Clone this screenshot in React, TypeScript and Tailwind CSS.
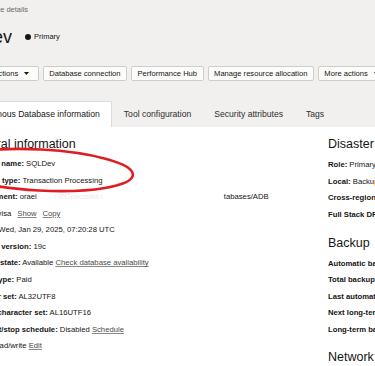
import React from 'react';

const Caret = () => (
  <svg width="5" height="3" viewBox="0 0 5 3" className="ml-[6px] mr-[3px] shrink-0">
    <path d="M0 0 L5 0 L2.5 3 Z" fill="#161513" />
  </svg>
);

function Btn({ label, caret }: { label: string; caret?: boolean }) {
  return (
    <div className="flex items-center h-[15px] px-[5.5px] border border-[#cfcdca] bg-[#fcfcfb] rounded-[2px] text-[7.6px] text-[#161513] whitespace-nowrap shrink-0">
      {label}
      {caret && <Caret />}
    </div>
  );
}

function Row({ label, children }: { label: string; children?: React.ReactNode }) {
  return (
    <div className="whitespace-nowrap leading-[16.55px]">
      <span className="font-bold">{label}</span> {children}
    </div>
  );
}

function Link({ children }: { children: React.ReactNode }) {
  return <span className="text-[#4a4a48] underline underline-offset-[1px] decoration-[#8a8a88]">{children}</span>;
}

export default function App() {
  const tabs = ['Autonomous Database information', 'Tool configuration', 'Security attributes', 'Tags'];

  return (
    <div className="relative w-[375px] h-[366px] overflow-hidden bg-white text-[#161513]" style={{ fontFamily: '"Liberation Sans", Arial, sans-serif' }}>
      <div className="-ml-[45px] w-[760px]">
        {/* header */}
        <div className="bg-[#f1f0ee]">
          <div className="pt-[5px] -ml-[27px] text-[7.5px] leading-[10px] text-[#6b6a68] whitespace-nowrap">
            Autonomous Database details
          </div>
          <div className="mt-[11px] -ml-[11px] flex items-center h-[22px]">
            <span className="text-[18px] leading-[22px]">SQLDev</span>
            <span className="ml-[13px] w-[6px] h-[6px] rounded-full bg-[#161513]" />
            <span className="ml-[3px] text-[7.5px]">Primary</span>
          </div>
          <div className="mt-[18px] -ml-[2px] flex gap-[4px]">
            <Btn label="Database actions" caret />
            <Btn label="Database connection" />
            <Btn label="Performance Hub" />
            <Btn label="Manage resource allocation" />
            <Btn label="More actions" caret />
          </div>
          <div className="mt-[20px] flex h-[26px]">
            {tabs.map((t, i) => (
              <div
                key={t}
                className={
                  i === 0
                    ? 'flex items-center px-[11.5px] bg-white border-t border-l border-r border-[#dcdbd9] rounded-t-[2px] text-[8.6px] whitespace-nowrap'
                    : 'flex items-center px-[11.5px] text-[8.6px] text-[#2f2e2c] whitespace-nowrap'
                }
              >
                {t}
              </div>
            ))}
          </div>
        </div>

        {/* content */}
        <div className="ml-[10px] flex text-[7.7px]">
          <div className="w-[363px] shrink-0 pt-[9px]">
            <h2 className="text-[12.5px] leading-[16px] ml-[1px] mb-[4.2px]">General information</h2>
            <Row label="Database name:">SQLDev</Row>
            <Row label="Workload type:">Transaction Processing</Row>
            <Row label="Compartment:">
              <span>oraei</span>
              <span className="inline-block w-[187px] text-[#ececec]">{'  .  .    . . ı ı0Gpecialist  ı'}</span>
              <span>tabases/ADB</span>
            </Row>
            <Row label="OCID:">
              <span className="ml-[1px]">…yisa</span>
              <span className="ml-[6px]"><Link>Show</Link></span>
              <span className="ml-[6px]"><Link>Copy</Link></span>
            </Row>
            <Row label="Created:">Wed, Jan 29, 2025, 07:20:28 UTC</Row>
            <Row label="Database version:">19c</Row>
            <Row label="Lifecycle state:">
              Available <Link>Check database availability</Link>
            </Row>
            <Row label="License type:">Paid</Row>
            <Row label="Character set:">AL32UTF8</Row>
            <Row label="National character set:">AL16UTF16</Row>
            <Row label="Auto start/stop schedule:">
              Disabled <Link>Schedule</Link>
            </Row>
            <Row label="Mode:">
              Read/write <Link>Edit</Link>
            </Row>
          </div>

          <div className="pt-[8.5px] whitespace-nowrap">
            <h2 className="text-[12.5px] leading-[16px] mb-[5.8px]">Disaster recovery</h2>
            <div className="leading-[16.7px]">
              <Row label="Role:">Primary</Row>
              <Row label="Local:">Backup-based disaster recovery</Row>
              <Row label="Cross-region disaster recovery:">Not enabled</Row>
              <Row label="Full Stack DR:">Not enabled</Row>
            </div>
            <h2 className="text-[12.5px] leading-[16px] mt-[11.3px] mb-[5px]">Backup</h2>
            <Row label="Automatic backups:">Enabled</Row>
            <Row label="Total backup storage:">0 GB</Row>
            <Row label="Last automatic backup:">-</Row>
            <Row label="Next long-term backup:">-</Row>
            <Row label="Long-term backups:">0</Row>
            <h2 className="text-[12.5px] leading-[16px] mt-[10.8px]">Network</h2>
          </div>
        </div>
      </div>

      {/* red annotation ellipse */}
      <svg className="absolute left-0 top-0 pointer-events-none" width="375" height="366">
        <ellipse cx="40" cy="170" rx="93" ry="20.5" transform="rotate(3 40 170)" fill="none" stroke="#e11b22" strokeWidth="2.6" />
      </svg>
    </div>
  );
}
